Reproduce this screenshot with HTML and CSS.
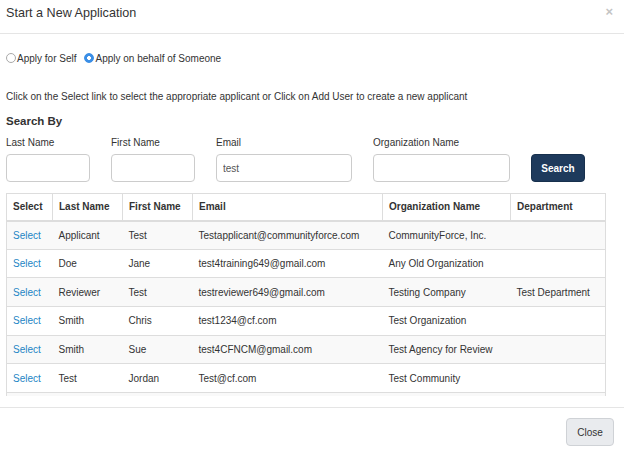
FILE: index.html
```html
<!DOCTYPE html>
<html lang="en">
<head>
<meta charset="utf-8">
<title>Start a New Application</title>
<link rel="stylesheet" href="styles.css">
</head>
<body>
<div class="modal">
  <div class="modal-header">
    <h4 class="modal-title">Start a New Application</h4>
    <span class="close">&times;</span>
  </div>
  <div class="modal-body">
    <div class="radios">
      <label class="radio"><input type="radio" name="apply"><span>Apply for Self</span></label>
      <label class="radio"><input type="radio" name="apply" checked><span>Apply on behalf of Someone</span></label>
    </div>
    <p class="hint">Click on the Select link to select the appropriate applicant or Click on Add User to create a new applicant</p>
    <h5 class="search-by">Search By</h5>
    <div class="fields">
      <div class="field f-last"><label>Last Name</label><input type="text"></div>
      <div class="field f-first"><label>First Name</label><input type="text"></div>
      <div class="field f-email"><label>Email</label><input type="text" value="test"></div>
      <div class="field f-org"><label>Organization Name</label><input type="text"></div>
      <button class="btn-search" type="button">Search</button>
    </div>
    <div class="table-wrap">
      <table class="results">
        <colgroup>
          <col class="c-sel"><col class="c-last"><col class="c-first"><col class="c-email"><col class="c-org"><col class="c-dept">
        </colgroup>
        <thead>
          <tr><th>Select</th><th>Last Name</th><th>First Name</th><th>Email</th><th>Organization Name</th><th>Department</th></tr>
        </thead>
        <tbody>
          <tr><td><a href="#">Select</a></td><td>Applicant</td><td>Test</td><td>Testapplicant@communityforce.com</td><td>CommunityForce, Inc.</td><td></td></tr>
          <tr><td><a href="#">Select</a></td><td>Doe</td><td>Jane</td><td>test4training649@gmail.com</td><td>Any Old Organization</td><td></td></tr>
          <tr><td><a href="#">Select</a></td><td>Reviewer</td><td>Test</td><td>testreviewer649@gmail.com</td><td>Testing Company</td><td>Test Department</td></tr>
          <tr><td><a href="#">Select</a></td><td>Smith</td><td>Chris</td><td>test1234@cf.com</td><td>Test Organization</td><td></td></tr>
          <tr><td><a href="#">Select</a></td><td>Smith</td><td>Sue</td><td>test4CFNCM@gmail.com</td><td>Test Agency for Review</td><td></td></tr>
          <tr><td><a href="#">Select</a></td><td>Test</td><td>Jordan</td><td>Test@cf.com</td><td>Test Community</td><td></td></tr>
          <tr><td><a href="#">Select</a></td><td>User</td><td>Test</td><td>testuser@cf.com</td><td>Test Organization</td><td></td></tr>
          <tr><td><a href="#">Select</a></td><td>White</td><td>Alex</td><td>test.alex@gmail.com</td><td>Test Foundation</td><td></td></tr>
          <tr><td><a href="#">Select</a></td><td>Young</td><td>Sam</td><td>testsam@cf.com</td><td>Test Community</td><td></td></tr>
        </tbody>
      </table>
    </div>
  </div>
  <div class="modal-footer">
    <button class="btn-close" type="button">Close</button>
  </div>
</div>
</body>
</html>
```

FILE: styles.css
```css
* { box-sizing: border-box; }
html, body { margin: 0; padding: 0; background: #fff; }
body {
  font-family: "Liberation Sans", Arial, Helvetica, sans-serif;
  font-size: 10px;
  color: #333;
  width: 624px;
  height: 451px;
  overflow: hidden;
}
.modal { width: 624px; height: 451px; background: #fff; }

.modal-header {
  height: 34px;
  padding: 6px 6px 0 6px;
  border-bottom: 1px solid #e5e5e5;
  display: flex;
  justify-content: space-between;
  align-items: flex-start;
}
.modal-title {
  margin: 0;
  font-size: 12.6px;
  font-weight: normal;
  line-height: 15px;
  color: #333;
}
.close {
  color: #c4c4c4;
  font-size: 13px;
  line-height: 13px;
  font-weight: bold;
  margin-top: -1px;
  margin-right: 5px;
}

.modal-body { padding: 0 6px; }
.radios {
  display: flex;
  align-items: center;
  margin-top: 17px;
  height: 14px;
  gap: 8px;
}
.radio { display: flex; align-items: center; }
.radio input {
  appearance: none;
  -webkit-appearance: none;
  width: 10px;
  height: 10px;
  margin: 0 1px 0 0;
  border: 1px solid #a9a9a9;
  border-radius: 50%;
  background: #fff;
}
.radio input:checked {
  border-color: #3a8ee6;
  background: radial-gradient(circle, #fff 0 1.6px, #3a8ee6 2.2px);
}
.hint {
  margin: 25px 0 0 0;
  line-height: 14px;
}
.search-by {
  margin: 10px 0 0 0;
  font-size: 11.5px;
  font-weight: bold;
  line-height: 14px;
}
.fields {
  display: flex;
  align-items: flex-end;
  gap: 21px;
  margin-top: 8px;
}
.field { display: flex; flex-direction: column; }
.field label { line-height: 14px; margin-bottom: 4px; }
.field input {
  height: 28px;
  border: 1px solid #ccc;
  border-radius: 4px;
  padding: 0 6px;
  font-family: inherit;
  font-size: 10px;
  color: #555;
  outline: none;
}
.f-last input, .f-first input { width: 84px; }
.f-email input { width: 136px; }
.f-org input { width: 137px; }
.btn-search {
  width: 54px;
  height: 28px;
  background: #1e3a5c;
  color: #fff;
  border: 1px solid #17304d;
  border-radius: 4px;
  font-family: inherit;
  font-weight: bold;
  font-size: 10px;
  padding: 0;
}

.table-wrap {
  margin-top: 11px;
  width: 610px;
  height: 203px;
  overflow-y: scroll;
}
.table-wrap::-webkit-scrollbar { width: 11px; }
.table-wrap::-webkit-scrollbar-track {
  background: #fafafa;
  border-left: 1px solid #e8e8e8;
  border-right: 1px solid #e8e8e8;
}
.table-wrap::-webkit-scrollbar-thumb {
  background: #c1c1c1;
  border-radius: 5px;
  border: 2px solid transparent;
  border-left-width: 3px;
  background-clip: padding-box;
}
.results {
  width: 599px;
  table-layout: fixed;
  border-collapse: collapse;
  border: 1px solid #ddd;
}
.c-sel { width: 46px; }
.c-last { width: 70px; }
.c-first { width: 70px; }
.c-email { width: 190px; }
.c-org { width: 128px; }
.c-dept { width: 95px; }
.results th {
  text-align: left;
  font-weight: bold;
  height: 27px;
  padding: 0 6px;
  border: 1px solid #ddd;
  border-bottom-width: 2px;
  white-space: nowrap;
}
.results td {
  height: 28.7px;
  padding: 0 6px;
  border-top: 1px solid #ddd;
  white-space: nowrap;
  overflow: hidden;
}
.results tbody tr:nth-child(odd) { background: #f9f9f9; }
.results a { color: #2385c5; text-decoration: none; }

.modal-footer {
  margin-top: 11px;
  border-top: 1px solid #e5e5e5;
  padding: 10px 10px 0 0;
  display: flex;
  justify-content: flex-end;
}
.btn-close {
  width: 48px;
  height: 28px;
  background: #e9ebee;
  border: 1px solid #cfd2d6;
  border-radius: 4px;
  font-family: inherit;
  font-size: 10px;
  color: #333;
  padding: 0;
}
```
